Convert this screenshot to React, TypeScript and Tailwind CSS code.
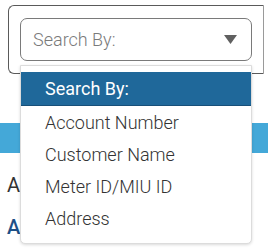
import React from "react";

const options = ["Account Number", "Customer Name", "Meter ID/MIU ID", "Address"];

export default function App() {
  return (
    <div
      className="relative w-[268px] h-[249px] overflow-hidden bg-white"
      style={{ fontFamily: "Roboto, 'Liberation Sans', sans-serif" }}
    >
      {/* search panel */}
      <div className="ml-[8px] mt-[5px] w-[256px] h-[69px] border border-[#5a5a5a] border-r-[#9a9a9a] rounded-l-[6px] pl-[11px] pt-[12px]">
        <div className="w-[232px] h-[43px] border border-[#7a7a7a] rounded-[7px] flex items-center justify-between pl-[12px] pr-[14px]">
          <span className="text-[18px] font-light text-[#7a7a7a]">Search By:</span>
          <svg width="13" height="9" viewBox="0 0 13 9">
            <path d="M0 0 H13 L6.5 9 Z" fill="#606060" />
          </svg>
        </div>
      </div>

      {/* content behind */}
      <div className="mt-[49px] h-[30px] bg-[#44a8d8]" />
      <div className="pl-[7px] mt-[20px] text-[20px] leading-[24px] text-[#333]">A</div>
      <div className="pl-[7px] mt-[18px] text-[20px] leading-[24px] text-[#1d4f86] font-medium">A</div>

      {/* open menu */}
      <div className="absolute left-[20px] top-[65px] w-[232px] h-[179px] bg-white border border-[#dcdcdc] rounded-b-[5px] shadow-[0_1px_3px_rgba(0,0,0,0.15)] pt-[6px]">
        <div className="h-[34px] bg-[#1f689a] text-white text-[18px] flex items-center pl-[24px] border-b border-[#174f78]">
          Search By:
        </div>
        {options.map((o) => (
          <div key={o} className="h-[32px] flex items-center pl-[24px] text-[18px] font-light text-[#333]">
            {o}
          </div>
        ))}
      </div>
    </div>
  );
}
